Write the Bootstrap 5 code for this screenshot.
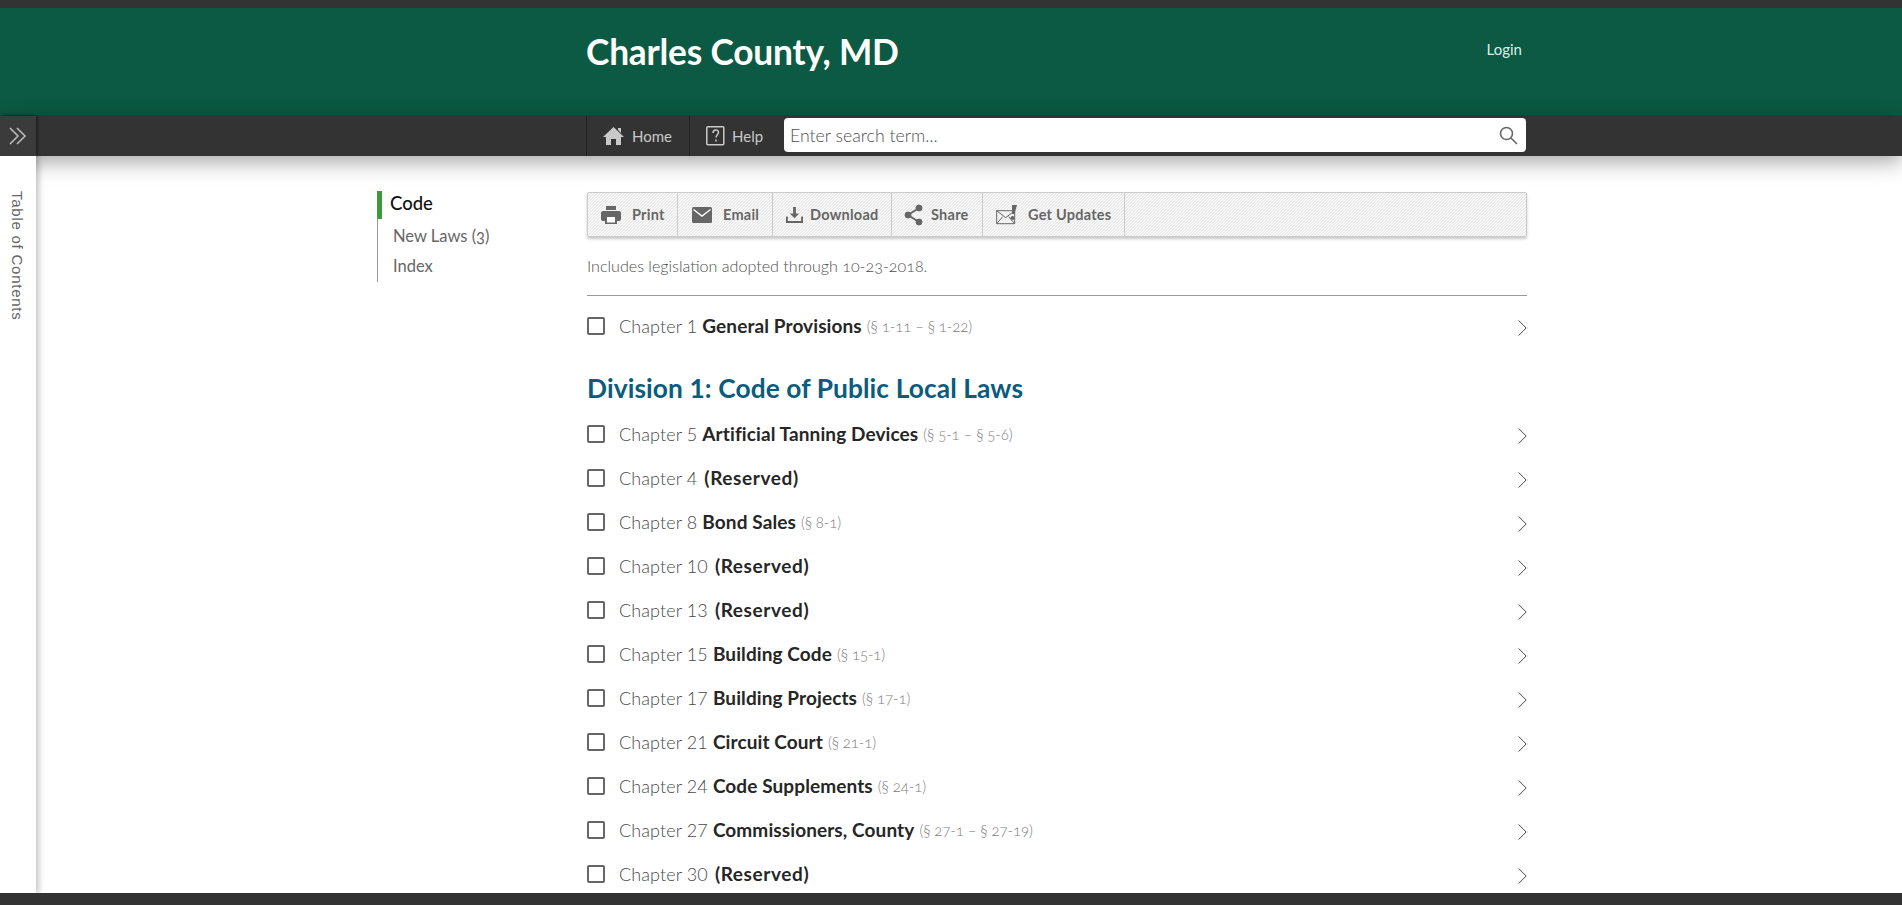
<!DOCTYPE html>
<html lang="en">
<head>
<meta charset="utf-8">
<title>Charles County, MD</title>
<link href="https://cdn.jsdelivr.net/npm/bootstrap@5.3.0/dist/css/bootstrap.min.css" rel="stylesheet">
<style>
html,body{height:100%;overflow:hidden}
body{font-family:Lato,"Open Sans","Liberation Sans",sans-serif;font-feature-settings:"onum";color:#222;background:#fff}
.page-shell{height:905px;display:flex;flex-direction:column}
.top-strip{height:8px;background:#333;flex:none}
.site-head{height:108px;background:#0c5a43;flex:none;padding-left:586px;border-bottom:1px solid #3a3a3a}
.head-inner{width:941px;height:88px}
.site-title{font-size:35.3px;font-weight:700;color:#fff;margin:0;letter-spacing:-.2px;line-height:1}
.login-link{color:#d8efe6;font-size:15px;text-decoration:none;margin:0 5px 5px 0}
.tool-bar{height:40px;background:#333;flex:none;padding:0;position:relative;z-index:3;box-shadow:0 5px 22px rgba(0,0,0,.38);flex-wrap:nowrap;justify-content:flex-start;align-items:stretch}
.expand-btn{width:36px;background:#3b3b3b;display:flex;align-items:center;justify-content:center;box-shadow:1px 0 3px rgba(0,0,0,.6)}
.bar-links{margin-left:550px;display:flex;width:940px;align-items:stretch}
.bar-link{display:flex;align-items:center;gap:8px;color:#c9c9c9;font-size:15px;text-decoration:none;border-left:1px solid #222;height:40px}
.bar-link-home{width:103px;padding-left:16px}
.bar-link-help{width:95px;padding-left:16px;gap:7px}
.search-wrap{flex:1;margin:2px 0 4px 0;position:relative}
.search-field.form-control{height:34px;border:0;border-radius:4px;font-size:17.7px;font-weight:300;padding:0 40px 0 6px;color:#555;font-family:inherit}
.search-field::placeholder{color:#4f4f4f;opacity:1}
.search-glass{position:absolute;right:8px;top:8px}
.body-row{flex:1;display:flex;min-height:0;overflow:hidden}
.toc-strip{width:36px;flex:none;background:#fff;box-shadow:2px 0 7px rgba(0,0,0,.28);position:relative;z-index:4}
.toc-label{writing-mode:vertical-rl;color:#666;margin:35px 0 0 5px;font-family:"Liberation Sans",sans-serif;font-size:15px;letter-spacing:.75px}
.doc-nav{width:173px;margin:35px 0 0 341px;flex:none;align-self:flex-start;border-left:1px solid #999;height:91px}
.doc-nav .nav-link{padding:0 0 0 15px;color:#666;font-size:16.5px;height:30px;line-height:30px}
.doc-nav .nav-link.active{color:#111;font-weight:500;font-size:18.5px;margin:0 0 2px -1px;background:linear-gradient(#3c9a3f,#3c9a3f) left/5px 100% no-repeat;height:28px;padding-left:13px;line-height:25px;border:0;border-radius:0}
.doc-col{width:940px;margin:0 0 0 37px;flex:none;padding-top:36px}
.action-bar{height:45px;display:flex;border:1px solid #ccc;border-radius:2px;box-shadow:0 2px 3px rgba(0,0,0,.22);background:linear-gradient(135deg,#ececec 25%,#fff 25%,#fff 50%,#ececec 50%,#ececec 75%,#fff 75%) 0 0/3px 3px}
.action-btn{display:flex;align-items:center;color:#666;font-weight:700;font-size:14.5px;letter-spacing:.25px;text-decoration:none;border-right:1px solid #ccc;height:100%;padding:0 0 0 13px;gap:11px}
.action-print{width:90px}
.action-email{width:95px;padding-left:14px}
.action-download{width:119px;gap:7px}
.action-share{width:91px;padding-left:12px;gap:8px}
.action-updates{width:142px;padding-left:13px;gap:10px}
.adopt-note{color:#4f4f4f;font-size:16.1px;font-weight:300;margin:16px 0 0;line-height:26px;border-bottom:1px solid #999;height:43px}
.chap-list{--bs-list-group-bg:transparent;--bs-list-group-border-width:0}
.chap-first{margin-top:8px}
.chap-row{display:flex;align-items:center;height:44px;padding:0!important;font-size:18px;color:#4a4a4a;font-weight:300;letter-spacing:.1px}
.chap-num{font-feature-settings:"lnum"}
.chap-row .form-check-input{width:18px;height:18px;margin:0 14px 0 0;border:2px solid #666;border-radius:2px;flex:none;background:#fff}
.chap-name{font-weight:700;font-size:19px;color:#262626;margin-left:5px}
.chap-res{letter-spacing:.6px;margin-left:7px}
.chap-range{color:#7c7c7c;font-size:15px;margin-left:5px;letter-spacing:-.1px}
.chap-arrow{margin-left:auto;margin-top:3px}
.div-title{color:#0a5c7f;font-size:26.3px;font-weight:700;margin:23px 0 7px;line-height:34px;letter-spacing:.1px;font-feature-settings:"lnum"}
.page-foot{height:12px;flex:none;background:#333;position:relative;z-index:5}
</style>
</head>
<body>
<div class="page-shell">
  <div class="top-strip"></div>
  <header class="site-head">
    <div class="head-inner d-flex align-items-center justify-content-between">
      <h1 class="site-title">Charles County, MD</h1>
      <a class="login-link" href="#">Login</a>
    </div>
  </header>
  <nav class="navbar tool-bar">
    <div class="expand-btn">
      <svg width="18" height="18" viewBox="0 0 18 18" fill="none" stroke="#bbb" stroke-width="1.6"><path d="M1 1l8 8-8 8M8 1l8 8-8 8"/></svg>
    </div>
    <div class="bar-links">
      <a class="bar-link bar-link-home" href="#">
        <svg width="21" height="18" viewBox="0 0 21 18" fill="#c9c9c9"><path d="M10.5 0L21 10h-3v8h-5v-6H8v6H3v-8H0z"/><path d="M15 1h3v5l-3-3z"/></svg>Home</a>
      <a class="bar-link bar-link-help" href="#">
        <svg width="19" height="20" viewBox="0 0 19 20" fill="none" stroke="#c9c9c9" stroke-width="1.5"><rect x=".8" y=".8" width="17" height="18" rx="1"/><path d="M7 7c0-4 5.500-4 5.500-.5 0 2-2.500 2.500-2.500 5M10 13.500v2"/></svg>Help</a>
      <div class="search-wrap">
        <input class="form-control search-field" type="text" placeholder="Enter search term...">
        <svg class="search-glass" width="19" height="19" viewBox="0 0 19 19" fill="none" stroke="#666" stroke-width="1.6"><circle cx="7.500" cy="7.500" r="6"/><path d="M12 12l6 6"/></svg>
      </div>
    </div>
  </nav>
  <div class="body-row">
    <aside class="toc-strip"><div class="toc-label">Table of Contents</div></aside>
    <nav class="nav flex-column doc-nav">
      <a class="nav-link active" href="#">Code</a>
      <a class="nav-link" href="#">New Laws (3)</a>
      <a class="nav-link" href="#">Index</a>
    </nav>
    <main class="doc-col">
      <div class="action-bar">
        <a class="action-btn action-print" href="#"><svg width="20" height="18" viewBox="0 0 20 18"><path fill="#666" d="M5 0h10v4H5zM2 5h16a2 2 0 0 1 2 2v6a2 2 0 0 1-2 2h-2v3H4v-3H2a2 2 0 0 1-2-2V7a2 2 0 0 1 2-2z"/><rect x="6" y="11" width="8" height="5.500" fill="#fff"/></svg>Print</a>
        <a class="action-btn action-email" href="#"><svg width="20" height="16" viewBox="0 0 20 16"><rect width="20" height="16" rx="1.500" fill="#666"/><path d="M1.500 2.500L10 9l8.500-6.500" fill="none" stroke="#fff" stroke-width="1.400"/></svg>Email</a>
        <a class="action-btn action-download" href="#"><svg width="17" height="17" viewBox="0 0 18 18" fill="#666"><path d="M7.500 1h3v7H14l-5 5-5-5h3.500z"/><path d="M0 11h2v5h14v-5h2v7H0z"/></svg>Download</a>
        <a class="action-btn action-share" href="#"><svg width="19" height="22" viewBox="0 0 19 22" fill="#666" stroke="#666"><circle cx="15" cy="4" r="3"/><circle cx="4" cy="11" r="3"/><circle cx="15" cy="18" r="3"/><path d="M15 4L4 11l11 7" fill="none" stroke-width="2"/></svg>Share</a>
        <a class="action-btn action-updates" href="#"><svg width="22" height="20" viewBox="0 0 22 20"><path d="M.7 5.700h18v13h-18zM.7 5.700l9 7 9-7M.7 18.700l6-7M18.700 18.700l-6-7" fill="none" stroke="#666"/><path d="M16 0h5l-2.500 9h-2.500z" fill="#666"/><circle cx="16.500" cy="13" r="2" fill="#666"/></svg>Get Updates</a>
      </div>
      <p class="adopt-note">Includes legislation adopted through 10-23-2018.</p>
      <div class="list-group list-group-flush chap-list chap-first">
        <div class="list-group-item chap-row"><input class="form-check-input" type="checkbox"><span class="chap-num">Chapter 1</span><span class="chap-name">General Provisions</span><span class="chap-range">(§ 1-11 – § 1-22)</span><svg class="chap-arrow" width="9" height="16" viewBox="0 0 9 16" fill="none" stroke="#444"><path d="M.7.500l7.500 7.500-7.500 7.500"/></svg></div>
      </div>
      <h2 class="div-title">Division 1: Code of Public Local Laws</h2>
      <div class="list-group list-group-flush chap-list">
        <div class="list-group-item chap-row"><input class="form-check-input" type="checkbox"><span class="chap-num">Chapter 5</span><span class="chap-name">Artificial Tanning Devices</span><span class="chap-range">(§ 5-1 – § 5-6)</span><svg class="chap-arrow" width="9" height="16" viewBox="0 0 9 16" fill="none" stroke="#444"><path d="M.7.500l7.500 7.500-7.500 7.500"/></svg></div>
        <div class="list-group-item chap-row"><input class="form-check-input" type="checkbox"><span class="chap-num">Chapter 4</span><span class="chap-name chap-res">(Reserved)</span><svg class="chap-arrow" width="9" height="16" viewBox="0 0 9 16" fill="none" stroke="#444"><path d="M.7.500l7.500 7.500-7.500 7.500"/></svg></div>
        <div class="list-group-item chap-row"><input class="form-check-input" type="checkbox"><span class="chap-num">Chapter 8</span><span class="chap-name">Bond Sales</span><span class="chap-range">(§ 8-1)</span><svg class="chap-arrow" width="9" height="16" viewBox="0 0 9 16" fill="none" stroke="#444"><path d="M.7.500l7.500 7.500-7.500 7.500"/></svg></div>
        <div class="list-group-item chap-row"><input class="form-check-input" type="checkbox"><span class="chap-num">Chapter 10</span><span class="chap-name chap-res">(Reserved)</span><svg class="chap-arrow" width="9" height="16" viewBox="0 0 9 16" fill="none" stroke="#444"><path d="M.7.500l7.500 7.500-7.500 7.500"/></svg></div>
        <div class="list-group-item chap-row"><input class="form-check-input" type="checkbox"><span class="chap-num">Chapter 13</span><span class="chap-name chap-res">(Reserved)</span><svg class="chap-arrow" width="9" height="16" viewBox="0 0 9 16" fill="none" stroke="#444"><path d="M.7.500l7.500 7.500-7.500 7.500"/></svg></div>
        <div class="list-group-item chap-row"><input class="form-check-input" type="checkbox"><span class="chap-num">Chapter 15</span><span class="chap-name">Building Code</span><span class="chap-range">(§ 15-1)</span><svg class="chap-arrow" width="9" height="16" viewBox="0 0 9 16" fill="none" stroke="#444"><path d="M.7.500l7.500 7.500-7.500 7.500"/></svg></div>
        <div class="list-group-item chap-row"><input class="form-check-input" type="checkbox"><span class="chap-num">Chapter 17</span><span class="chap-name">Building Projects</span><span class="chap-range">(§ 17-1)</span><svg class="chap-arrow" width="9" height="16" viewBox="0 0 9 16" fill="none" stroke="#444"><path d="M.7.500l7.500 7.500-7.500 7.500"/></svg></div>
        <div class="list-group-item chap-row"><input class="form-check-input" type="checkbox"><span class="chap-num">Chapter 21</span><span class="chap-name">Circuit Court</span><span class="chap-range">(§ 21-1)</span><svg class="chap-arrow" width="9" height="16" viewBox="0 0 9 16" fill="none" stroke="#444"><path d="M.7.500l7.500 7.500-7.500 7.500"/></svg></div>
        <div class="list-group-item chap-row"><input class="form-check-input" type="checkbox"><span class="chap-num">Chapter 24</span><span class="chap-name">Code Supplements</span><span class="chap-range">(§ 24-1)</span><svg class="chap-arrow" width="9" height="16" viewBox="0 0 9 16" fill="none" stroke="#444"><path d="M.7.500l7.500 7.500-7.500 7.500"/></svg></div>
        <div class="list-group-item chap-row"><input class="form-check-input" type="checkbox"><span class="chap-num">Chapter 27</span><span class="chap-name">Commissioners, County</span><span class="chap-range">(§ 27-1 – § 27-19)</span><svg class="chap-arrow" width="9" height="16" viewBox="0 0 9 16" fill="none" stroke="#444"><path d="M.7.500l7.500 7.500-7.500 7.500"/></svg></div>
        <div class="list-group-item chap-row"><input class="form-check-input" type="checkbox"><span class="chap-num">Chapter 30</span><span class="chap-name chap-res">(Reserved)</span><svg class="chap-arrow" width="9" height="16" viewBox="0 0 9 16" fill="none" stroke="#444"><path d="M.7.500l7.500 7.500-7.500 7.500"/></svg></div>
      </div>
    </main>
  </div>
  <div class="page-foot"></div>
</div>
<script src="https://cdn.jsdelivr.net/npm/bootstrap@5.3.0/dist/js/bootstrap.bundle.min.js"></script>
</body>
</html>
